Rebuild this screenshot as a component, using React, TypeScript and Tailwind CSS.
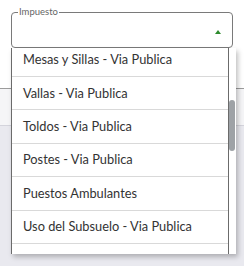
import React from 'react'

const options = [
  'Mesas y Sillas - Via Publica',
  'Vallas - Via Publica',
  'Toldos - Via Publica',
  'Postes - Via Publica',
  'Puestos Ambulantes',
  'Uso del Subsuelo - Via Publica',
  'Anuncios - Via Publica',
]

export default function App() {
  return (
    <div className="relative h-[266px] w-[244px] overflow-hidden bg-white font-['Lato','Noto_Sans',sans-serif] text-[#333]">
      {/* select field */}
      <div className="px-[11px] pt-[7px]">
        <fieldset className="h-[41px] rounded-[4px] border border-[#7a7a7a] pl-[6px] pr-[11px]">
          <legend className="px-[1px] text-[9.5px] leading-[10px] text-[#666]">Impuesto</legend>
          <div className="flex h-[28px] items-center justify-end pt-[1px]">
            <svg width="6" height="4" viewBox="0 0 6 4">
              <polygon points="0,4 3,0 6,4" fill="#2e8b2e" />
            </svg>
          </div>
        </fieldset>
      </div>

      {/* page behind the menu */}
      <div className="mt-[40px] h-[37px] border-t border-[#9c9c9c] bg-[#f5f5f7]" />
      <div className="h-[150px] border-t border-[#d4d4dc] bg-[#e9e9ef]" />

      {/* open menu */}
      <div className="absolute left-[11px] top-[48px] flex h-[206px] w-[225px] bg-white shadow-[2px_3px_5px_rgba(0,0,0,0.25)]">
        <div className="h-full w-[218px] overflow-hidden border-x border-[#6b6b6b]">
          <ul className="-mt-[4.4px]">
            {options.map((o) => (
              <li
                key={o}
                className="flex h-[33.4px] items-center border-b border-[#d9d9d9] pl-[11px] text-[12.8px]"
              >
                {o}
              </li>
            ))}
          </ul>
        </div>
        <div className="h-full w-[7px] pt-[52px]">
          <div className="h-[51px] w-[6px] rounded-full bg-[#9ea2a6]" />
        </div>
      </div>
    </div>
  )
}
